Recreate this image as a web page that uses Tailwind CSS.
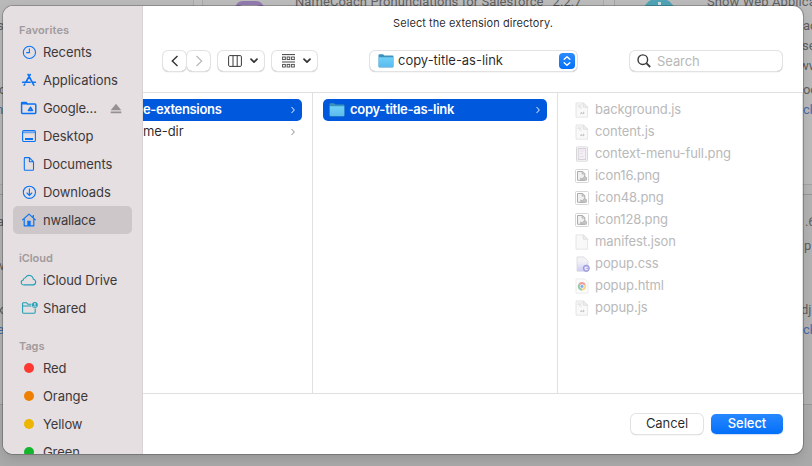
<!DOCTYPE html>
<html lang="en">
<head>
<meta charset="utf-8">
<title>Select the extension directory</title>
<script src="https://cdn.jsdelivr.net/npm/@tailwindcss/browser@4"></script>
</head>
<body class="relative h-[466px] w-[812px] overflow-hidden bg-[#b2b2b2] font-['Inter','Liberation_Sans',sans-serif] text-[13px] tracking-[-0.08px] text-black/85">

<!-- Dimmed extensions page behind the dialog -->
<div class="absolute inset-0 overflow-hidden bg-linear-to-b from-[#bdbdbd] to-[#a9a9a9] text-[#5f5f5f] font-['Roboto',sans-serif]">
  <div class="absolute -left-2 -top-2 h-[193px] w-[202px] rounded border border-[#a9a9a9] bg-[#b9b9b9]"></div>
  <div class="absolute left-[202px] -top-2 h-[193px] w-[402px] rounded border border-[#a9a9a9] bg-[#bbbbbb]"></div>
  <div class="absolute left-[614px] -top-2 h-[193px] w-[220px] rounded border border-[#a3a3a3] bg-[#bababa]"></div>
  <div class="absolute -left-2 top-[194px] h-[211px] w-[202px] rounded border border-[#989898] bg-[#b3b3b3]"></div>
  <div class="absolute left-[614px] top-[194px] h-[211px] w-[220px] rounded border border-[#989898] bg-[#b2b2b2]"></div>
  <div class="absolute left-[235px] top-[1px] size-[29px] rounded-lg border-4 border-[#9179ae]"></div>
  <div class="absolute left-[642px] -top-[2px] size-[34px] rounded-full bg-[#4fa3b5]"></div>
  <div class="absolute left-[658px] top-[2px] h-[3px] w-[3px] bg-[#c8dce0]"></div>
  <div class="absolute left-[295px] -top-[8px] flex gap-[9px] text-[13px] leading-5 tracking-[0.06px]"><span>NameCoach Pronunciations for Salesforce</span><span>2.2.7</span></div>
  <div class="absolute left-[707px] -top-[8px] whitespace-pre text-[13px] leading-5 tracking-[0.1px]">Show Web Applications</div>
  <div class="absolute left-[803px] top-[16px] text-[13px] leading-5">ac</div>
  <div class="absolute left-[802px] top-[36px] text-[13px] leading-5">se</div>
  <div class="absolute left-[799px] top-[56px] text-[13px] leading-5">ww</div>
  <div class="absolute left-[803px] top-[80px] text-[13px] leading-5">oc</div>
  <div class="absolute left-[803px] top-[100px] text-[13px] leading-5 text-[#456da6]">ck</div>
  <div class="absolute left-[805px] top-[212px] text-[13px] leading-5">.6</div>
  <div class="absolute left-[804px] top-[236px] text-[13px] leading-5">p</div>
  <div class="absolute left-[801px] top-[300px] text-[13px] leading-5">djl</div>
  <div class="absolute left-[803px] top-[320px] text-[13px] leading-5 text-[#456da6]">ck</div>
  <div class="absolute -left-[3px] top-[16px] text-[13px] leading-5">s</div>
  <div class="absolute -left-[4px] top-[80px] text-[13px] leading-5">lo</div>
  <div class="absolute -left-[4px] top-[100px] text-[13px] leading-5 text-[#456da6]">n</div>
  <div class="absolute -left-[3px] top-[212px] text-[13px] leading-5">a</div>
  <div class="absolute -left-[5px] top-[256px] text-[13px] leading-5">w</div>
  <div class="absolute -left-[3px] top-[300px] text-[13px] leading-5">x</div>
  <div class="absolute -left-[3px] top-[320px] text-[13px] leading-5 text-[#456da6]">e</div>
</div>

<!-- Icons shared by several rows -->
<svg class="absolute size-0">
  <defs>
    <linearGradient id="blueFolder" x1="0" y1="0" x2="0" y2="1"><stop offset="0" stop-color="#6fd0f8"/><stop offset="1" stop-color="#5bbcee"/></linearGradient>
    <symbol id="folder" viewBox="0 0 16 16">
      <path d="M.5 2.2Q.5 1.2 1.5 1.2H5L6.4 2.4H14.5Q15.5 2.4 15.5 3.4V13.4Q15.5 14.5 14.5 14.5H1.5Q.5 14.5.5 13.4Z" fill="#3b93bd"/>
      <path d="M.8 4.2H15.2V13.1Q15.2 14 14.3 14H1.7Q.8 14 .8 13.1Z" fill="url(#blueFolder)"/>
    </symbol>
    <symbol id="chev" viewBox="0 0 6 10"><path d="M1.5 2 4.2 5 1.5 8" fill="none" stroke="currentColor" stroke-width="1.1"/></symbol>
    <symbol id="down" viewBox="0 0 8 6"><path d="M1 1.2 4 4.2 7 1.2" fill="none" stroke="currentColor" stroke-width="1.7" stroke-linecap="round" stroke-linejoin="round"/></symbol>
    <symbol id="doc" viewBox="0 0 16 16"><path d="M2 .9H9.3L13.6 5.2V15.2H2Z" fill="#f9f9f9" stroke="#e0e0e0" stroke-width=".8"/><path d="M9.3.9V5.2H13.6Z" fill="#efefef" stroke="#d9d9d9" stroke-width=".7"/></symbol>
    <symbol id="js" viewBox="0 0 16 16"><use href="#doc"/><path d="M3.5 3H8M3.5 4.5H7M5 6H8" stroke="#dedede" stroke-width=".8"/><path d="M6.2 11.6H7.4V10M8.4 11.6H9.8V10.2H8.8" fill="none" stroke="#b4b4b4" stroke-width=".8"/></symbol>
    <symbol id="png" viewBox="0 0 16 16"><rect x="1.5" y="1.5" width="13" height="13" rx="1" fill="#fff" stroke="#d2d2d2" stroke-width=".9"/><path d="M3.5 3.5H8.5L10.8 5.5V12.3H3.5Z" fill="#f1f1f1" stroke="#adadad"/><path d="M8.2 3.5V6H11" fill="none" stroke="#adadad"/><path d="M6.7 12.3V9.9L8.3 11 10.3 8.4 12.5 9.5V12.3Z" fill="#c4c4c4" stroke="#a6a6a6" stroke-width=".6"/></symbol>
  </defs>
</svg>

<!-- Dialog window -->
<main class="absolute left-[3px] top-[6px] flex h-[448px] w-[800px] overflow-hidden rounded-[10px] bg-white shadow-[0_0_0_1px_rgba(0,0,0,0.22),0_5px_12px_rgba(0,0,0,0.12)]">

  <aside class="w-[140px] shrink-0 overflow-hidden border-r border-[#d8d2d5] bg-[#e5dfe1] text-[#3d393b]">
    <h2 class="h-8 pl-4 pt-4 text-[11px] font-semibold leading-4 text-[#a09a9d]"><span class="tracking-[0.13px]">Favorites</span></h2>
    <ul class="text-[#0a73f5]">
      <li class="flex h-7 items-center pl-[18px]"><svg class="mr-[6px] size-4" viewBox="0 0 16 16" fill="none" stroke="currentColor"><circle cx="8.4" cy="8.4" r="6.1" stroke-width="1.1"/><path d="M8.4 4.6V8.6H5.2" stroke-width="1.1"/></svg><span class="pt-[2px] text-[#3d393b]">Recents</span></li>
      <li class="flex h-7 items-center pl-[18px]"><svg class="mr-[6px] size-4" viewBox="0 0 16 16" fill="none" stroke="currentColor" stroke-width="1.6" stroke-linecap="round"><path d="M7 2.4 12.8 13.2M9.2 2.5 5 10M3.8 12 3.2 13.2M1.6 10.3H9.2M12 10.3H14.4"/></svg><span class="pt-[2px] text-[#3d393b]">Applications</span></li>
      <li class="flex h-7 items-center pl-[17px]"><svg class="mr-[6px] h-4 w-[17px]" viewBox="0 0 17 16" fill="none" stroke="currentColor"><path d="M1.6 12.5V3Q1.6 2.4 2.3 2.4H6L7.5 4.1H15Q15.8 4.1 15.8 4.9V12.6Q15.8 13.5 15 13.5H2.4Q1.6 13.5 1.6 12.5Z" stroke-width="1.5"/><path d="M1.4 2.5H6.5L8 4.4H1.4Z" fill="currentColor" stroke="none"/><path d="M10.4 7.3 12.4 10.4H8.5Z" stroke-width="1.6" stroke-linejoin="round"/></svg><span class="pt-[2px] text-[#3d393b] tracking-[-0.2px]">Google…</span><svg class="ml-auto mr-[20px] h-[11px] w-3" viewBox="0 0 12 11" fill="#969093"><path d="M6 .8 11.3 7.2H.7Z"/><path d="M.7 8.4H11.3V10.2H.7Z"/></svg></li>
      <li class="flex h-7 items-center pl-[18px]"><svg class="mr-[6px] size-4" viewBox="0 0 16 16" fill="none" stroke="currentColor"><rect x="1.6" y="2.5" width="12.8" height="11" rx="1.3" stroke-width="1.1"/><path d="M2 4.2H14" stroke-width="2" stroke-opacity=".55"/><path d="M4 11H12" stroke-width="1.9"/></svg><span class="pt-[2px] text-[#3d393b]">Desktop</span></li>
      <li class="flex h-7 items-center pl-[18px]"><svg class="mr-[6px] size-4" viewBox="0 0 16 16" fill="none" stroke="currentColor" stroke-width="1.1" stroke-linejoin="round"><path d="M4.2 1.6H8.4L12.5 5.8V13.4Q12.5 14.3 11.6 14.3H4.2Q3.3 14.3 3.3 13.4V2.5Q3.3 1.6 4.2 1.6ZM8.4 1.8V5.8H12.3"/></svg><span class="pt-[2px] text-[#3d393b]">Documents</span></li>
      <li class="flex h-7 items-center pl-[18px]"><svg class="mr-[6px] size-4" viewBox="0 0 16 16" fill="none" stroke="currentColor" stroke-width="1.1"><circle cx="8.4" cy="8.3" r="6.1"/><path d="M8.4 4.8V11.2M6 9 8.4 11.4 10.8 9" stroke-linecap="round"/></svg><span class="pt-[2px] text-[#3d393b]">Downloads</span></li>
      <li class="ml-[10px] mr-[10px] flex h-7 items-center rounded-[5px] bg-[#cdc7c9] pl-2"><svg class="mr-[6px] size-4" viewBox="0 0 16 16" fill="none" stroke="currentColor" stroke-width="1.2" stroke-linejoin="round"><path d="M1.3 8.1 8 2.1 14.7 8.1M12.3 5.5V3M3.2 6.8V13.8H12.8V6.8"/><path d="M6.3 8.8H9.7V13.8H6.3Z" fill="currentColor" stroke="none"/></svg><span class="pt-[2px] text-[#3d393b] tracking-[-0.2px]">nwallace</span></li>
    </ul>
    <h2 class="h-8 pl-4 pt-4 text-[11px] font-semibold leading-4 text-[#a09a9d]">iCloud</h2>
    <ul class="text-[#21a0b6]">
      <li class="flex h-7 items-center pl-[17px]"><svg class="mr-[6px] h-4 w-[17px]" viewBox="0 0 17 16" fill="none" stroke="currentColor" stroke-width="1.1"><path d="M4.4 12.9H13.2A2.9 2.9 0 0 0 13.4 7.2 4.3 4.3 0 0 0 5.3 5.7 2.5 2.5 0 0 0 3.2 8 2.5 2.5 0 0 0 4.4 12.9Z"/></svg><span class="pt-[2px] text-[#3d393b]">iCloud Drive</span></li>
      <li class="flex h-7 items-center pl-[18px]"><svg class="mr-[5px] h-4 w-[17px]" viewBox="0 0 17 16" fill="none" stroke="currentColor"><path d="M10.5 4.2H6.9L5.5 2.7H2.4Q1.6 2.7 1.6 3.5V12.1Q1.6 13.2 2.6 13.2H13.2Q14.2 13.2 14.2 12.1V8.6M1.6 6H10.4" stroke-width="1.1"/><circle cx="13.9" cy="4.9" r="2.9" fill="currentColor" stroke="none"/><circle cx="13.9" cy="4" r=".9" fill="#e5dfe1" stroke="none"/><path d="M12.3 6.7Q13.9 4.9 15.5 6.7" stroke="#e5dfe1" stroke-width="1"/></svg><span class="pt-[2px] text-[#3d393b]">Shared</span></li>
    </ul>
    <h2 class="h-8 pl-4 pt-4 text-[11px] font-semibold leading-4 text-[#a09a9d]">Tags</h2>
    <ul>
      <li class="flex h-7 items-center gap-[9px] pl-[21px]"><i class="size-[10px] rounded-full bg-[#ff3830]"></i><span class="pt-[2px]">Red</span></li>
      <li class="flex h-7 items-center gap-[9px] pl-[21px]"><i class="size-[10px] rounded-full bg-[#ed8000]"></i><span class="pt-[2px]">Orange</span></li>
      <li class="flex h-7 items-center gap-[9px] pl-[21px]"><i class="size-[10px] rounded-full bg-[#edb400]"></i><span class="pt-[2px]">Yellow</span></li>
      <li class="flex h-7 items-center gap-[9px] pl-[21px]"><i class="size-[10px] rounded-full bg-[#14b52d]"></i><span class="pt-[2px]">Green</span></li>
    </ul>
  </aside>

  <section class="relative flex min-w-0 flex-1 flex-col">
    <header class="h-[87px] shrink-0 border-b border-[#e0e0e0]">
      <p class="pt-[9px] text-center text-[11px] leading-4"><span class="tracking-[0.06px]">Select the extension directory.</span></p>
      <div class="mt-[20px] flex h-5 items-center pl-5">
        <button class="flex h-5 w-[23px] items-center justify-center rounded-[5px] shadow-[0_0_0_1px_#e2e2e2,0_1px_1px_rgba(0,0,0,0.35)]"><svg class="h-3 w-2" viewBox="0 0 8 12" fill="none" stroke="#333" stroke-width="1.4"><path d="M6.5 1 1.3 6 6.5 11"/></svg></button>
        <button class="ml-[1px] flex h-5 w-[23px] items-center justify-center rounded-[5px] shadow-[0_0_0_1px_#e2e2e2,0_1px_1px_rgba(0,0,0,0.35)]"><svg class="h-3 w-2" viewBox="0 0 8 12" fill="none" stroke="#b9b9b9" stroke-width="1.2"><path d="M1.5 1 6.7 6 1.5 11"/></svg></button>
        <button class="ml-2 flex h-5 w-[46px] items-center rounded-[5px] pl-[10px] shadow-[0_0_0_1px_#e2e2e2,0_1px_1px_rgba(0,0,0,0.35)]"><svg class="h-3 w-[14px]" viewBox="0 0 14 12" fill="none" stroke="#3a3a3a"><rect x=".6" y=".6" width="12.8" height="10.8" rx="1.2"/><path d="M5 .6V11.4M9.2 .6V11.4"/></svg><svg class="ml-[8px] h-[6px] w-2 text-[#333]"><use href="#down"/></svg></button>
        <button class="ml-2 flex h-5 w-[45px] items-center rounded-[5px] pl-[10px] shadow-[0_0_0_1px_#e2e2e2,0_1px_1px_rgba(0,0,0,0.35)]"><svg class="h-[14px] w-[13px]" viewBox="0 0 13 14" fill="none" stroke="#444"><path d="M0 .6H13M0 8H13"/><g stroke-width=".9"><rect x=".6" y="3" width="2.7" height="2.6"/><rect x="5.1" y="3" width="2.7" height="2.6"/><rect x="9.6" y="3" width="2.7" height="2.6"/><rect x=".6" y="10.4" width="2.7" height="2.6"/><rect x="5.1" y="10.4" width="2.7" height="2.6"/><rect x="9.6" y="10.4" width="2.7" height="2.6"/></g></svg><svg class="ml-[8px] h-[6px] w-2 text-[#333]"><use href="#down"/></svg></button>
        <button class="ml-[53px] flex h-5 w-[207px] items-center rounded-[5px] pl-2 pr-[2px] shadow-[0_0_0_1px_#e2e2e2,0_1px_1px_rgba(0,0,0,0.35)]"><svg class="mr-1 size-4"><use href="#folder"/></svg><span class="tracking-[-0.02px]">copy-title-as-link</span><span class="ml-auto flex h-4 w-4 items-center justify-center rounded-[4px] bg-linear-to-b from-[#2b8bff] to-[#0070f8]"><svg class="h-3 w-2" viewBox="0 0 8 12" fill="none" stroke="#fff" stroke-width="1.4" stroke-linecap="round" stroke-linejoin="round"><path d="M1.2 4.3 4 1.7 6.8 4.3M1.2 7.7 4 10.3 6.8 7.7"/></svg></span></button>
        <div class="ml-[53px] flex h-5 w-[152px] items-center rounded-[5px] pl-[7px] text-[#b7b7b7] shadow-[0_0_0_1px_#e2e2e2,0_1px_1px_rgba(0,0,0,0.35)]"><svg class="mr-[6px] h-[14px] w-[14px]" viewBox="0 0 14 14" fill="none" stroke="#3a3a3a" stroke-width="1.4"><circle cx="5.8" cy="5.7" r="4.8"/><path d="M9.3 9.2 13.2 13" stroke-width="1.8"/></svg><span class="pt-[2px]">Search</span></div>
      </div>
    </header>

    <div class="flex h-[301px] shrink-0 border-b border-[#e0e0e0]">
      <div class="w-[170px] border-r border-[#e0e0e0] pr-[10px] pt-[6px]">
        <div class="flex h-[22px] items-center rounded-r-[5px] bg-[#0058dc] pr-[6px] font-semibold text-white"><span class="tracking-[-0.33px]">e-extensions</span><svg class="ml-auto h-[10px] w-[6px] text-[#b9d2fa]"><use href="#chev"/></svg></div>
        <div class="flex h-[22px] items-center pr-[6px]"><span>me-dir</span><svg class="ml-auto h-[10px] w-[6px] text-[#a6a6a6]"><use href="#chev"/></svg></div>
      </div>
      <div class="w-[245px] border-r border-[#e0e0e0] pl-[10px] pr-[10px] pt-[6px]">
        <div class="flex h-[22px] items-center rounded-[5px] bg-[#0058dc] pl-[6px] pr-[6px] font-semibold text-white"><svg class="mr-[5px] size-4"><use href="#folder"/></svg><span class="tracking-[-0.28px]">copy-title-as-link</span><svg class="ml-auto h-[10px] w-[6px] text-[#b9d2fa]"><use href="#chev"/></svg></div>
      </div>
      <ul class="flex-1 border-r border-[#e0e0e0] pl-4 pt-[6px] text-[#b9b9b9]">
        <li class="flex h-[22px] items-center gap-[5px]"><svg class="size-4"><use href="#js"/></svg><span>background.js</span></li>
        <li class="flex h-[22px] items-center gap-[5px]"><svg class="size-4"><use href="#js"/></svg><span>content.js</span></li>
        <li class="flex h-[22px] items-center gap-[5px]"><svg class="size-4" viewBox="0 0 16 16"><rect x="2.5" y=".9" width="11" height="14.2" rx=".6" fill="#fff" stroke="#d2d2d2" stroke-width=".9"/><rect x="4.2" y="2.6" width="7.6" height="10.8" fill="#f3eff6" stroke="#d3ced5"/><path d="M5.8 5H10M5.8 7.5H9M5.8 10.5H10" stroke="#ebdde8"/></svg><span>context-menu-full.png</span></li>
        <li class="flex h-[22px] items-center gap-[5px]"><svg class="size-4"><use href="#png"/></svg><span>icon16.png</span></li>
        <li class="flex h-[22px] items-center gap-[5px]"><svg class="size-4"><use href="#png"/></svg><span>icon48.png</span></li>
        <li class="flex h-[22px] items-center gap-[5px]"><svg class="size-4"><use href="#png"/></svg><span>icon128.png</span></li>
        <li class="flex h-[22px] items-center gap-[5px]"><svg class="size-4"><use href="#doc"/></svg><span>manifest.json</span></li>
        <li class="flex h-[22px] items-center gap-[5px]"><svg class="size-4" viewBox="0 0 16 16"><defs><linearGradient id="cssDoc" x1="0" y1="0" x2="0" y2="1"><stop offset=".3" stop-color="#f3f3f5"/><stop offset="1" stop-color="#cfcdf8"/></linearGradient></defs><path d="M3 .9H10L14 5V15.2H3Z" fill="url(#cssDoc)" stroke="#d4d4de" stroke-width=".7"/><circle cx="12.3" cy="12.3" r="3.1" fill="#b6b4ec" stroke="#908edb" stroke-width=".8"/><path d="M13.5 11.3 11.1 11.6 11.6 13.5H13.5" fill="none" stroke="#fff" stroke-width=".8"/></svg><span>popup.css</span></li>
        <li class="flex h-[22px] items-center gap-[5px]"><svg class="size-4" viewBox="0 0 16 16"><path d="M2 .9H10.5L14 4.4V15.2H2Z" fill="#fcfcfc" stroke="#e8e8e8" stroke-width=".8"/><g fill="none" stroke-width="2.2"><path d="M5.2 6.8A3.2 3.2 0 0 1 10.8 6.8" stroke="#ef9c96"/><path d="M10.8 6.8A3.2 3.2 0 0 1 8 11.6" stroke="#f8d98b"/><path d="M8 11.6A3.2 3.2 0 0 1 5.2 6.8" stroke="#93cca2"/></g><circle cx="8" cy="8.4" r="1.8" fill="#79a8f1" stroke="#fff" stroke-width=".5"/></svg><span>popup.html</span></li>
        <li class="flex h-[22px] items-center gap-[5px]"><svg class="size-4"><use href="#js"/></svg><span>popup.js</span></li>
      </ul>
    </div>

    <footer class="flex flex-1 items-center justify-end gap-2 pr-5">
      <button class="flex h-5 w-[72px] items-center justify-center rounded-[5px] bg-white shadow-[0_0_0_1px_#e2e2e2,0_1px_1px_rgba(0,0,0,0.35)]">Cancel</button>
      <button class="flex h-5 w-[72px] items-center justify-center rounded-[5px] bg-linear-to-b from-[#2688ff] to-[#006ff9] font-medium text-white shadow-[0_1px_1px_rgba(0,80,200,0.2)]">Select</button>
    </footer>
  </section>
</main>
</body>
</html>
